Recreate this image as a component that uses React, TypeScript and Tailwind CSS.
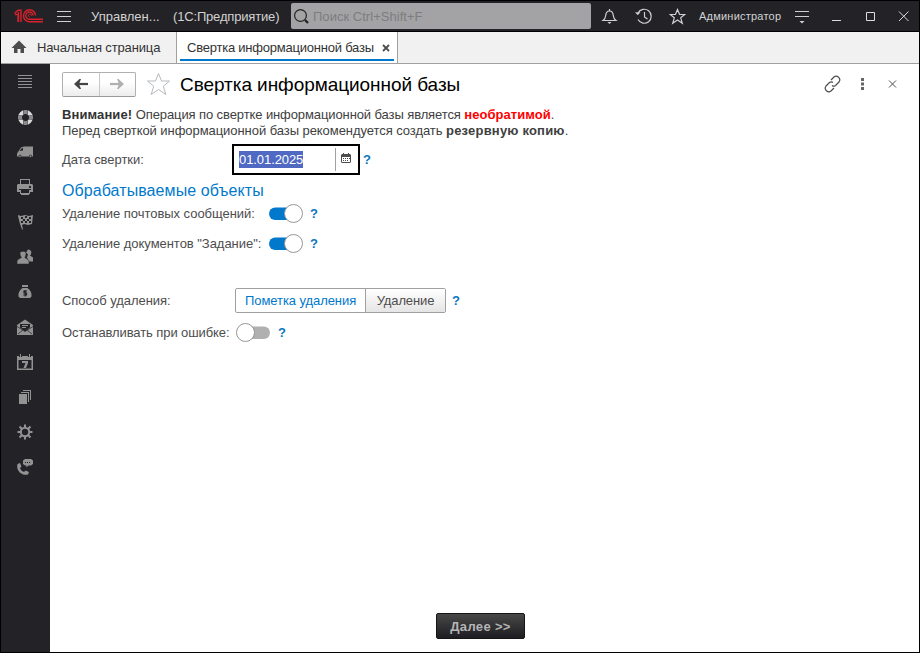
import type { ReactNode } from "react";

function SideIcon({ children }: { children: ReactNode }) {
  return (
    <div className="flex h-[35px] items-center justify-center">
      <svg width="18" height="18" viewBox="0 0 18 18" fill="#929292" stroke="none">
        {children}
      </svg>
    </div>
  );
}

function Sidebar() {
  return (
    <nav className="w-[49px] shrink-0 bg-[#232227] pr-[1px]">
      <SideIcon>
        <path d="M2 2h14v1H2zM2 5h14v1H2zM2 8h14v1H2zM2 11h14v1H2zM2 14h14v1H2z" />
      </SideIcon>
      <SideIcon>
        <circle cx="9.500" cy="9.500" r="5.500" fill="none" stroke="#dadada" strokeWidth="4" />
        <path d="M7.400 1.500h4.200v5H7.400zM7.400 12.500h4.200v5H7.400zM1.500 7.400h5v4.200h-5zM12.500 7.400h5v4.200h-5z" fill="#232227" />
        <path d="M8 2h3v4H8zM8 13h3v4H8zM2 8h4v3H2zM13 8h4v3h-4z" fill="#8a8a8a" />
      </SideIcon>
      <SideIcon>
        <path d="M1 10.500 2 9l3-4.500L8 3.500h9v10H1z" />
        <path d="M3.500 8 5.500 5.500 7 5v2.500z" fill="#232227" />
        <circle cx="4" cy="13.200" r="1.200" stroke="#232227" strokeWidth=".7" />
        <circle cx="14.500" cy="13.200" r="1.200" stroke="#232227" strokeWidth=".7" />
      </SideIcon>
      <SideIcon>
        <path d="M4 1h10v5H4zM2 6h14l1 1v7h-3v-2H4v2H1V7zM5 12h8v5H5z" />
        <path d="M5 2h8v4H5zM3 11h12v1H3zM5 12h8v4H5zM13 8h2v2h-2z" fill="#232227" />
        <path d="M5 15h8v2H5zM4 12h1v4H4zM13 12h1v4h-1z" />
      </SideIcon>
      <SideIcon>
        <path d="M2 2l3 1 4-1 4 1 4-1-1 9-4 1-4-1-2 1 1 4.500H6L4 11 2 3z" />
        <path d="M5 4h2v2H5zM9 3h2v2H9zM13 4h2v2h-2zM7 6h2v2H7zM11 6h2v2h-2zM5 8h2v2H5zM9 8h2v2H9zM13 8h2v2h-2z" fill="#232227" />
      </SideIcon>
      <SideIcon>
        <path d="M12 1.500c4 0 4 4 2 6l3 2v4h-4l-2-4 1-3-2-2z" />
        <path d="M4 5.500C4 2.500 10 2.500 10 5.500c0 2-.5 3-1.200 4l3.200 2c1 .7 1 2 1 4.500H1c0-2.500 0-3.800 1-4.500l3.500-2c-.7-1-1.500-2-1.500-4z" stroke="#232227" strokeWidth=".5" />
      </SideIcon>
      <SideIcon>
        <path d="M6 2h6v2H6zM6.500 5h5c3 2 4.500 5 4 8.500L14 15H4l-1.500-1.500C2 10 3.500 7 6.500 5z" />
        <path d="M11 8H8v2h2.500v2H7.300M9.200 7v6.500" fill="none" stroke="#232227" strokeWidth="1.200" />
      </SideIcon>
      <SideIcon>
        <path d="M1 7l3-2 5-3.500L14 5l3 2v10H1z" />
        <path d="M4 6h10v3.500l-5 4-5-4z" fill="#232227" />
        <path d="M6 7h6v1H6zM6 9h4v1H6z" />
        <path d="M1 8.500l8 5 8-5M2 16l5-4M16 16l-5-4" fill="none" stroke="#232227" strokeWidth=".7" />
      </SideIcon>
      <SideIcon>
        <path d="M1 3h3V1h1v3h1V3h6v1h1V1h1v2h3v14H1z" />
        <path d="M2.500 7h13v8.500h-13zM3 2h1v2H3zM5 2h1v2H5zM12 2h1v2h-1zM14 2h1v2h-1z" fill="#232227" />
        <path d="M6 8h6v2l-2 5H7.500l2-5H6z" />
      </SideIcon>
      <SideIcon>
        <path d="M3 6h8v10H3zM5 4h8v10h-1V5H5zM7 2h8v10h-1V3H7z" />
      </SideIcon>
      <SideIcon>
        <circle cx="9" cy="9" r="4.200" fill="none" stroke="#929292" strokeWidth="2" />
        <path d="M9 1.500V5M9 13v3.500M1.500 9H5M13 9h3.500M3.500 3.500l3 3M11.500 11.500l3 3M14.500 3.500l-3 3M6.500 11.500l-3 3" stroke="#929292" strokeWidth="2" />
      </SideIcon>
      <SideIcon>
        <path d="M1.500 6 4 5l1.500 3.500L4 10c.6 2 2 3.300 4 4l1.500-1.500L13 14l-1 2.500c-2 .7-5 .5-7.500-1.500C2 13 .5 10 1.500 6z" />
        <path d="M9 1h6l2 1.500V6l-2 1.500h-2.500l-2 2v-2H9L7 6V2.500z" />
        <path d="M9 4h1v1H9zM11 4h1v1h-1zM13 4h1v1h-1z" fill="#232227" />
      </SideIcon>
    </nav>
  );
}

function TitleBar() {
  return (
    <header className="flex h-[31px] items-center border-b border-black bg-[#232227] text-[13px] text-[#d2d2d2]">
      <svg className="ml-[12px] shrink-0" width="32" height="16" viewBox="0 0 32 16" fill="none" stroke="#d8222b" strokeWidth="1.400">
        <path d="M1.500 5.500 5 2.200h3V14M2 6.500h3V14M5.500 4v10" />
        <path d="M22.500 7.500A6 6 0 1 0 16.500 13.800H30" />
        <path d="M20 7.500A3.600 3.600 0 1 0 16.500 11.200H30" />
        <path d="M18.500 7.800a1.500 1.500 0 1 0-2 1.200" strokeWidth="1" />
      </svg>
      <svg className="ml-[12px] shrink-0" width="14" height="12" viewBox="0 0 14 12" fill="#d0d0d0">
        <path d="M0 1h14v1H0zM0 6h14v1H0zM0 11h14v1H0z" />
      </svg>
      <span className="mt-[1px] ml-[20px] w-[82px] shrink-0 whitespace-nowrap">Управлен...</span>
      <span className="mt-[1px] w-[118px] shrink-0 tracking-[-0.17px] whitespace-nowrap">(1С:Предприятие)</span>
      <div className="flex h-[26px] w-[300px] shrink-0 items-center rounded-[2px] bg-[#a3a3a5] text-[#7d7d7f]">
        <svg className="ml-[2px]" width="17" height="17" viewBox="0 0 17 17" fill="none" stroke="#222">
          <circle cx="7.500" cy="7.500" r="5.900" strokeWidth="1.200" />
          <path d="m12 12 3 3" strokeWidth="2.300" />
        </svg>
        <span className="mt-[1px] ml-[3px] tracking-[0.03px]">Поиск Ctrl+Shift+F</span>
      </div>
      <svg className="ml-[10px] shrink-0" width="17" height="18" viewBox="0 0 17 18" fill="none" stroke="#d0d0d0" strokeWidth="1.200">
        <path d="M2 13.500h13c-2-1.500-2.500-2.500-2.700-5C12 5.500 11 4 8.500 4S5 5.500 4.700 8.500C4.500 11 4 12 2 13.500z" />
        <path d="M8.500 2v2" />
        <path d="M6.500 15h4l-2 2z" fill="#d0d0d0" stroke="none" />
      </svg>
      <svg className="ml-[17px] shrink-0" width="18" height="18" viewBox="0 0 18 18" fill="none" stroke="#d0d0d0" strokeWidth="1.200">
        <path d="M3 6a7 7 0 1 1 0 6.500M9.500 5v5l3 2" />
        <path d="M.5 5.500h4.500L2.700 8z" fill="#d0d0d0" strokeWidth=".4" />
      </svg>
      <svg className="ml-[16px] shrink-0" width="17" height="17" viewBox="0 0 17 17" fill="none" stroke="#d0d0d0" strokeWidth="1.200">
        <path d="m8.500 1.500 2.100 5h5.200l-4.100 3.300 1.600 5.500-4.800-3.400-4.800 3.400 1.600-5.500-4.100-3.300h5.200z" />
      </svg>
      <span className="ml-[13px] w-[96px] shrink-0 whitespace-nowrap text-[11px] tracking-[0.22px]">Администратор</span>
      <svg className="mt-[1px] shrink-0" width="14" height="14" viewBox="0 0 14 14" fill="#d0d0d0">
        <path d="M0 1h14v1H0zM0 6h14v1H0zM4.500 11h5l-2.500 2.500z" />
      </svg>
      <svg className="ml-[23px] shrink-0" width="77" height="12" viewBox="0 0 77 12" fill="none" stroke="#dcdcdc">
        <path d="M0 10.500h9M34.500 2.500h8v8h-8zM67 1.500l9.500 9.500M76.500 1.500 67 11" />
      </svg>
    </header>
  );
}

function TabBar() {
  return (
    <div className="flex h-[32px] border-b border-[#a0a0a0] bg-[#f1f1f1] text-[13px] text-[#333]">
      <div className="flex w-[175px] items-center">
        <svg className="mb-[2px] ml-[10px]" width="16" height="14" viewBox="0 0 16 14" fill="#4d4d4d">
          <path d="M8 .5 15.500 8H13v5H9.500V9h-3v4H3V8H.5z" />
        </svg>
        <span className="ml-[10px] tracking-[-0.14px] whitespace-nowrap">Начальная страница</span>
      </div>
      <div className="w-[222px] border-x border-[#a0a0a0] bg-white px-[3px]">
        <div className="flex h-[29px] items-center justify-between border-b-2 border-[#0079cc] pt-[4px] pr-[4px] pl-[7px]">
          <span className="tracking-[-0.22px] whitespace-nowrap">Свертка информационной базы</span>
          <svg width="8" height="8" viewBox="0 0 8 8" stroke="#4d4d4d" strokeWidth="1.800">
            <path d="m1 1 6 6M7 1 1 7" />
          </svg>
        </div>
      </div>
    </div>
  );
}

function Help({ className = "" }: { className?: string }) {
  return <span className={"text-[13px] font-bold text-[#0b77bf] " + className}>?</span>;
}

function Toggle({ on = false }: { on?: boolean }) {
  return (
    <svg className="shrink-0" width="35" height="20" viewBox="0 0 35 20">
      <rect x={on ? 0 : 3} y="3.500" width="31" height="12.500" rx="6.200" fill={on ? "#0079cc" : "#b0b0b0"} />
      <circle cx={on ? 24.500 : 9.500} cy="9.500" r="9" fill="#fff" stroke="#969696" />
    </svg>
  );
}

export default function App() {
  return (
    <div className="flex h-[653px] w-[920px] flex-col overflow-hidden border border-black bg-white font-['Liberation_Sans',Arial,sans-serif] text-[13px] text-[#4d4d4d]">
      <TitleBar />
      <TabBar />
      <div className="flex min-h-0 flex-1">
        <Sidebar />
        <main className="flex min-w-0 flex-1 flex-col pl-[12px]">
          <div className="mt-[7px] flex h-[27px] items-center">
            <div className="flex h-[25px] w-[74px] shrink-0 rounded-[2px] border border-[#b0b0b0] border-b-[#999] bg-linear-to-b from-white from-40% to-[#ececec]">
              <div className="flex flex-1 items-center justify-center border-r border-[#c8c8c8]">
                <svg className="mb-[1px]" width="14" height="12" viewBox="0 0 14 12" stroke="#444" fill="#444">
                  <path d="M4 6h10" strokeWidth="2.200" />
                  <path d="M0 6 5.500 1h1.500L5 6l2 5H5.500z" stroke="none" />
                </svg>
              </div>
              <div className="flex flex-1 items-center justify-center">
                <svg className="mb-[1px]" width="14" height="12" viewBox="0 0 14 12" stroke="#b0b0b0" fill="#b0b0b0">
                  <path d="M0 6h10" strokeWidth="2.200" />
                  <path d="M14 6 8.500 1H7l2 5-2 5h1.500z" stroke="none" />
                </svg>
              </div>
            </div>
            <svg className="mb-[2px] ml-[10px] shrink-0" width="25" height="24" viewBox="0 0 25 24" fill="none" stroke="#b5bac0">
              <path d="m12.500 1.500 3 7.500h8l-6.200 5.200 2.500 8.300-7.300-5-7.300 5 2.500-8.300L1.500 9h8z" />
            </svg>
            <h1 className="mt-[1px] ml-[9px] text-[19px] tracking-[-0.06px] whitespace-nowrap text-black">Свертка информационной базы</h1>
            <svg className="mr-[19px] mb-[2px] ml-auto" width="76" height="18" viewBox="0 0 76 18" fill="none" stroke="#4d4d4d" strokeWidth="1.200">
              <path d="m7 5 3-3c3-2.500 7.500 1.500 5 5l-3.500 3.500c-1 .8-2.500.8-3.500 0M10 13l-3 3c-3 2.500-7.500-1.500-5-5l3.500-3.500c1-.8 2.500-.8 3.500 0" />
              <path d="M37 3h3v3h-3zM37 7.500h3v3h-3zM37 12h3v3h-3z" fill="#666" stroke="none" />
              <path d="m65 5.500 7 7M72 5.500l-7 7" strokeWidth="1" />
            </svg>
          </div>
          <p className="mt-[9px] text-[13px] leading-[16px] whitespace-nowrap text-[#404040]">
            <b className="tracking-[0.1px] text-[#333]">Внимание!</b>
            <span className="tracking-[-0.1px]"> Операция по свертке информационной базы является </span>
            <b className="tracking-[0.05px] text-[#f00]">необратимой</b>.
            <br />
            <span className="tracking-[-0.06px]">Перед сверткой информационной базы рекомендуется создать </span>
            <b className="tracking-[0.2px]">резервную копию</b>.
          </p>
          <div className="mt-[5px] flex h-[31px] items-center">
            <span className="w-[170px] tracking-[-0.05px]">Дата свертки:</span>
            <div className="flex h-[31px] w-[128px] items-center border-2 border-black bg-white">
              <span className="ml-[5px] h-[17px] w-[64px] bg-[#5069c2] leading-[17px] tracking-[-0.08px] text-white">01.01.2025</span>
              <div className="ml-auto flex h-[23px] w-[23px] items-center border-l border-[#a0a0a0] pb-[3px] pl-[5px]">
                <svg width="10" height="10" viewBox="0 0 10 10" fill="#4d4d4d">
                  <path d="M1 1h1V0h1v1h4V0h1v1h1l1 1v7l-1 1H1L0 9V2z" />
                  <path d="M1 4h8v5H1z" fill="#fff" />
                  <path d="M2 5h1v1H2zM4 5h1v1H4zM6 5h1v1H6zM8 5h1v1H8zM2 7h1v1H2zM4 7h1v1H4zM6 7h1v1H6z" />
                </svg>
              </div>
            </div>
            <Help className="ml-[3px]" />
          </div>
          <h2 className="mt-[6px] h-[20px] text-[16px] leading-[20px] tracking-[0.08px] whitespace-nowrap text-[#0079cc]">Обрабатываемые объекты</h2>
          <div className="mt-[3px] flex h-[20px] items-center">
            <span className="w-[207px] tracking-[-0.04px] whitespace-nowrap">Удаление почтовых сообщений:</span>
            <Toggle on />
            <Help className="ml-[6px]" />
          </div>
          <div className="mt-[10px] flex h-[20px] items-center">
            <span className="w-[207px] tracking-[-0.04px] whitespace-nowrap">Удаление документов "Задание":</span>
            <Toggle on />
            <Help className="ml-[6px]" />
          </div>
          <div className="mt-[34px] flex h-[25px] items-center">
            <span className="w-[173px] tracking-[-0.05px]">Способ удаления:</span>
            <div className="flex h-[25px] w-[211px] rounded-[2px] border border-[#a0a0a0] leading-[23px]">
              <span className="w-[130px] border-r border-[#a0a0a0] pl-[9px] tracking-[-0.07px] whitespace-nowrap text-[#0079cc]">Пометка удаления</span>
              <span className="flex-1 bg-linear-to-b from-white to-[#e5e5e5] text-center tracking-[-0.1px]">Удаление</span>
            </div>
            <Help className="ml-[6px]" />
          </div>
          <div className="mt-[10px] flex h-[20px] items-center">
            <span className="w-[174px] tracking-[-0.09px] whitespace-nowrap">Останавливать при ошибке:</span>
            <Toggle />
            <Help className="ml-[7px]" />
          </div>
          <button className="mt-auto mb-[13px] ml-[374px] h-[26px] w-[89px] rounded-[2px] border border-[#151515] bg-linear-to-b from-[#484848] to-[#1e1e22] pt-[1px] text-[13px] font-bold tracking-[0.33px] text-[#b5b5b5]">
            Далее &gt;&gt;
          </button>
        </main>
      </div>
    </div>
  );
}
